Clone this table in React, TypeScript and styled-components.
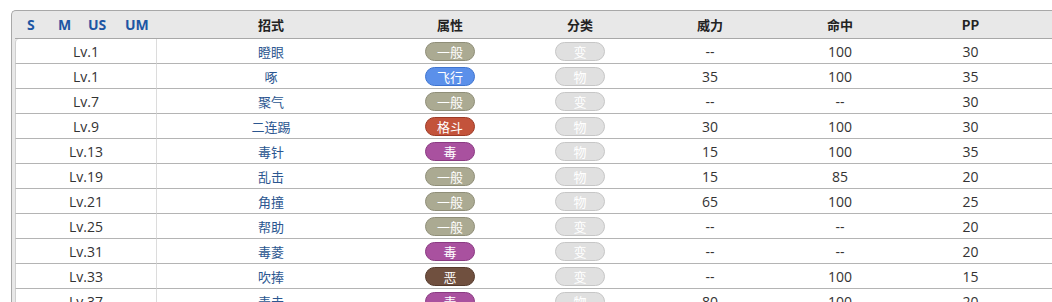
import React from 'react';
import styled, { createGlobalStyle } from 'styled-components';

const GlobalStyle = createGlobalStyle`
  body {
    margin: 0;
    background: #ffffff;
    overflow: hidden;
    font-family: 'Open Sans', 'Noto Sans CJK SC', sans-serif;
  }
`;

const typeColors: Record<string, { bg: string; border: string }> = {
  一般: { bg: '#abaa92', border: '#8f8e78' },
  飞行: { bg: '#5b90ea', border: '#3f74cf' },
  格斗: { bg: '#c3533b', border: '#9c3a26' },
  毒: { bg: '#a9519f', border: '#8a3a82' },
  恶: { bg: '#70503f', border: '#553a2c' },
};

const Page = styled.div`
  padding: 10px 0 0 11px;
  width: 1060px;
`;

const Frame = styled.div`
  border: 1px solid #a8a8a8;
  border-right: none;
  border-bottom: none;
  border-radius: 5px 0 0 0;
  background: #e8e8e8;
  padding-left: 3px;
`;

const Table = styled.table`
  border-collapse: separate;
  border-spacing: 0;
  width: 100%;
  table-layout: fixed;
  font-size: 14px;
  color: #333;
`;

const HeadCell = styled.th<{ $w?: number }>`
  ${p => (p.$w ? `width: ${p.$w}px;` : '')}
  height: 27px;
  padding: 0;
  font-family: 'Noto Sans CJK SC', sans-serif;
  font-weight: bold;
  font-size: 13px;
  color: #222;
  text-align: center;
  border-bottom: 1px solid #a8a8a8;
`;

const GameTabs = styled.div`
  display: flex;
  align-items: center;
  padding-left: 12px;
`;

const GameTab = styled.span<{ $w: number }>`
  width: ${p => p.$w}px;
  text-align: left;
  font-family: 'Open Sans', sans-serif;
  font-weight: bold;
  font-size: 14px;
  color: #1d56a3;
`;

const Cell = styled.td<{ $first?: boolean; $top?: boolean }>`
  height: 24px;
  padding: 0;
  background: #fff;
  text-align: center;
  border-bottom: 1px solid #b4b4b4;
  ${p => p.$first && 'border-left: 1px solid #cfcfcf; border-right: 1px solid #dcdcdc;'}
  ${p => p.$first && p.$top && 'border-top-left-radius: 4px;'}
`;

const MoveLink = styled.span`
  font-family: 'Noto Sans CJK SC', sans-serif;
  font-size: 13px;
  color: #2b5690;
`;

const Pill = styled.span<{ $bg: string; $border: string }>`
  display: inline-flex;
  align-items: center;
  justify-content: center;
  box-sizing: border-box;
  width: 50px;
  height: 19px;
  border-radius: 10px;
  background: ${p => p.$bg};
  border: 1px solid ${p => p.$border};
  color: #fff;
  font-family: 'Noto Sans CJK SC', sans-serif;
  font-size: 13px;
  vertical-align: middle;
`;

const moves = [
  ['Lv.1', '瞪眼', '一般', '变', '--', '100', '30'],
  ['Lv.1', '啄', '飞行', '物', '35', '100', '35'],
  ['Lv.7', '聚气', '一般', '变', '--', '--', '30'],
  ['Lv.9', '二连踢', '格斗', '物', '30', '100', '30'],
  ['Lv.13', '毒针', '毒', '物', '15', '100', '35'],
  ['Lv.19', '乱击', '一般', '物', '15', '85', '20'],
  ['Lv.21', '角撞', '一般', '物', '65', '100', '25'],
  ['Lv.25', '帮助', '一般', '变', '--', '--', '20'],
  ['Lv.31', '毒菱', '毒', '变', '--', '--', '20'],
  ['Lv.33', '吹捧', '恶', '变', '--', '100', '15'],
  ['Lv.37', '毒击', '毒', '物', '80', '100', '20'],
];

export default function App() {
  return (
    <>
      <GlobalStyle />
      <Page>
        <Frame>
          <Table>
            <thead>
              <tr>
                <HeadCell $w={142}>
                  <GameTabs>
                    <GameTab $w={31}>S</GameTab>
                    <GameTab $w={30}>M</GameTab>
                    <GameTab $w={37}>US</GameTab>
                    <GameTab $w={30}>UM</GameTab>
                  </GameTabs>
                </HeadCell>
                <HeadCell $w={228}>招式</HeadCell>
                <HeadCell $w={130}>属性</HeadCell>
                <HeadCell $w={130}>分类</HeadCell>
                <HeadCell $w={130}>威力</HeadCell>
                <HeadCell $w={130}>命中</HeadCell>
                <HeadCell $w={131}>PP</HeadCell>
                <HeadCell></HeadCell>
              </tr>
            </thead>
            <tbody>
              {moves.map(([lv, name, type, cat, power, acc, pp], i) => (
                <tr key={i}>
                  <Cell $first $top={i === 0}>{lv}</Cell>
                  <Cell><MoveLink>{name}</MoveLink></Cell>
                  <Cell>
                    <Pill $bg={typeColors[type].bg} $border={typeColors[type].border}>{type}</Pill>
                  </Cell>
                  <Cell>
                    <Pill $bg="#e0e0e0" $border="#c6c6c6">{cat}</Pill>
                  </Cell>
                  <Cell>{power}</Cell>
                  <Cell>{acc}</Cell>
                  <Cell>{pp}</Cell>
                  <Cell></Cell>
                </tr>
              ))}
            </tbody>
          </Table>
        </Frame>
      </Page>
    </>
  );
}
